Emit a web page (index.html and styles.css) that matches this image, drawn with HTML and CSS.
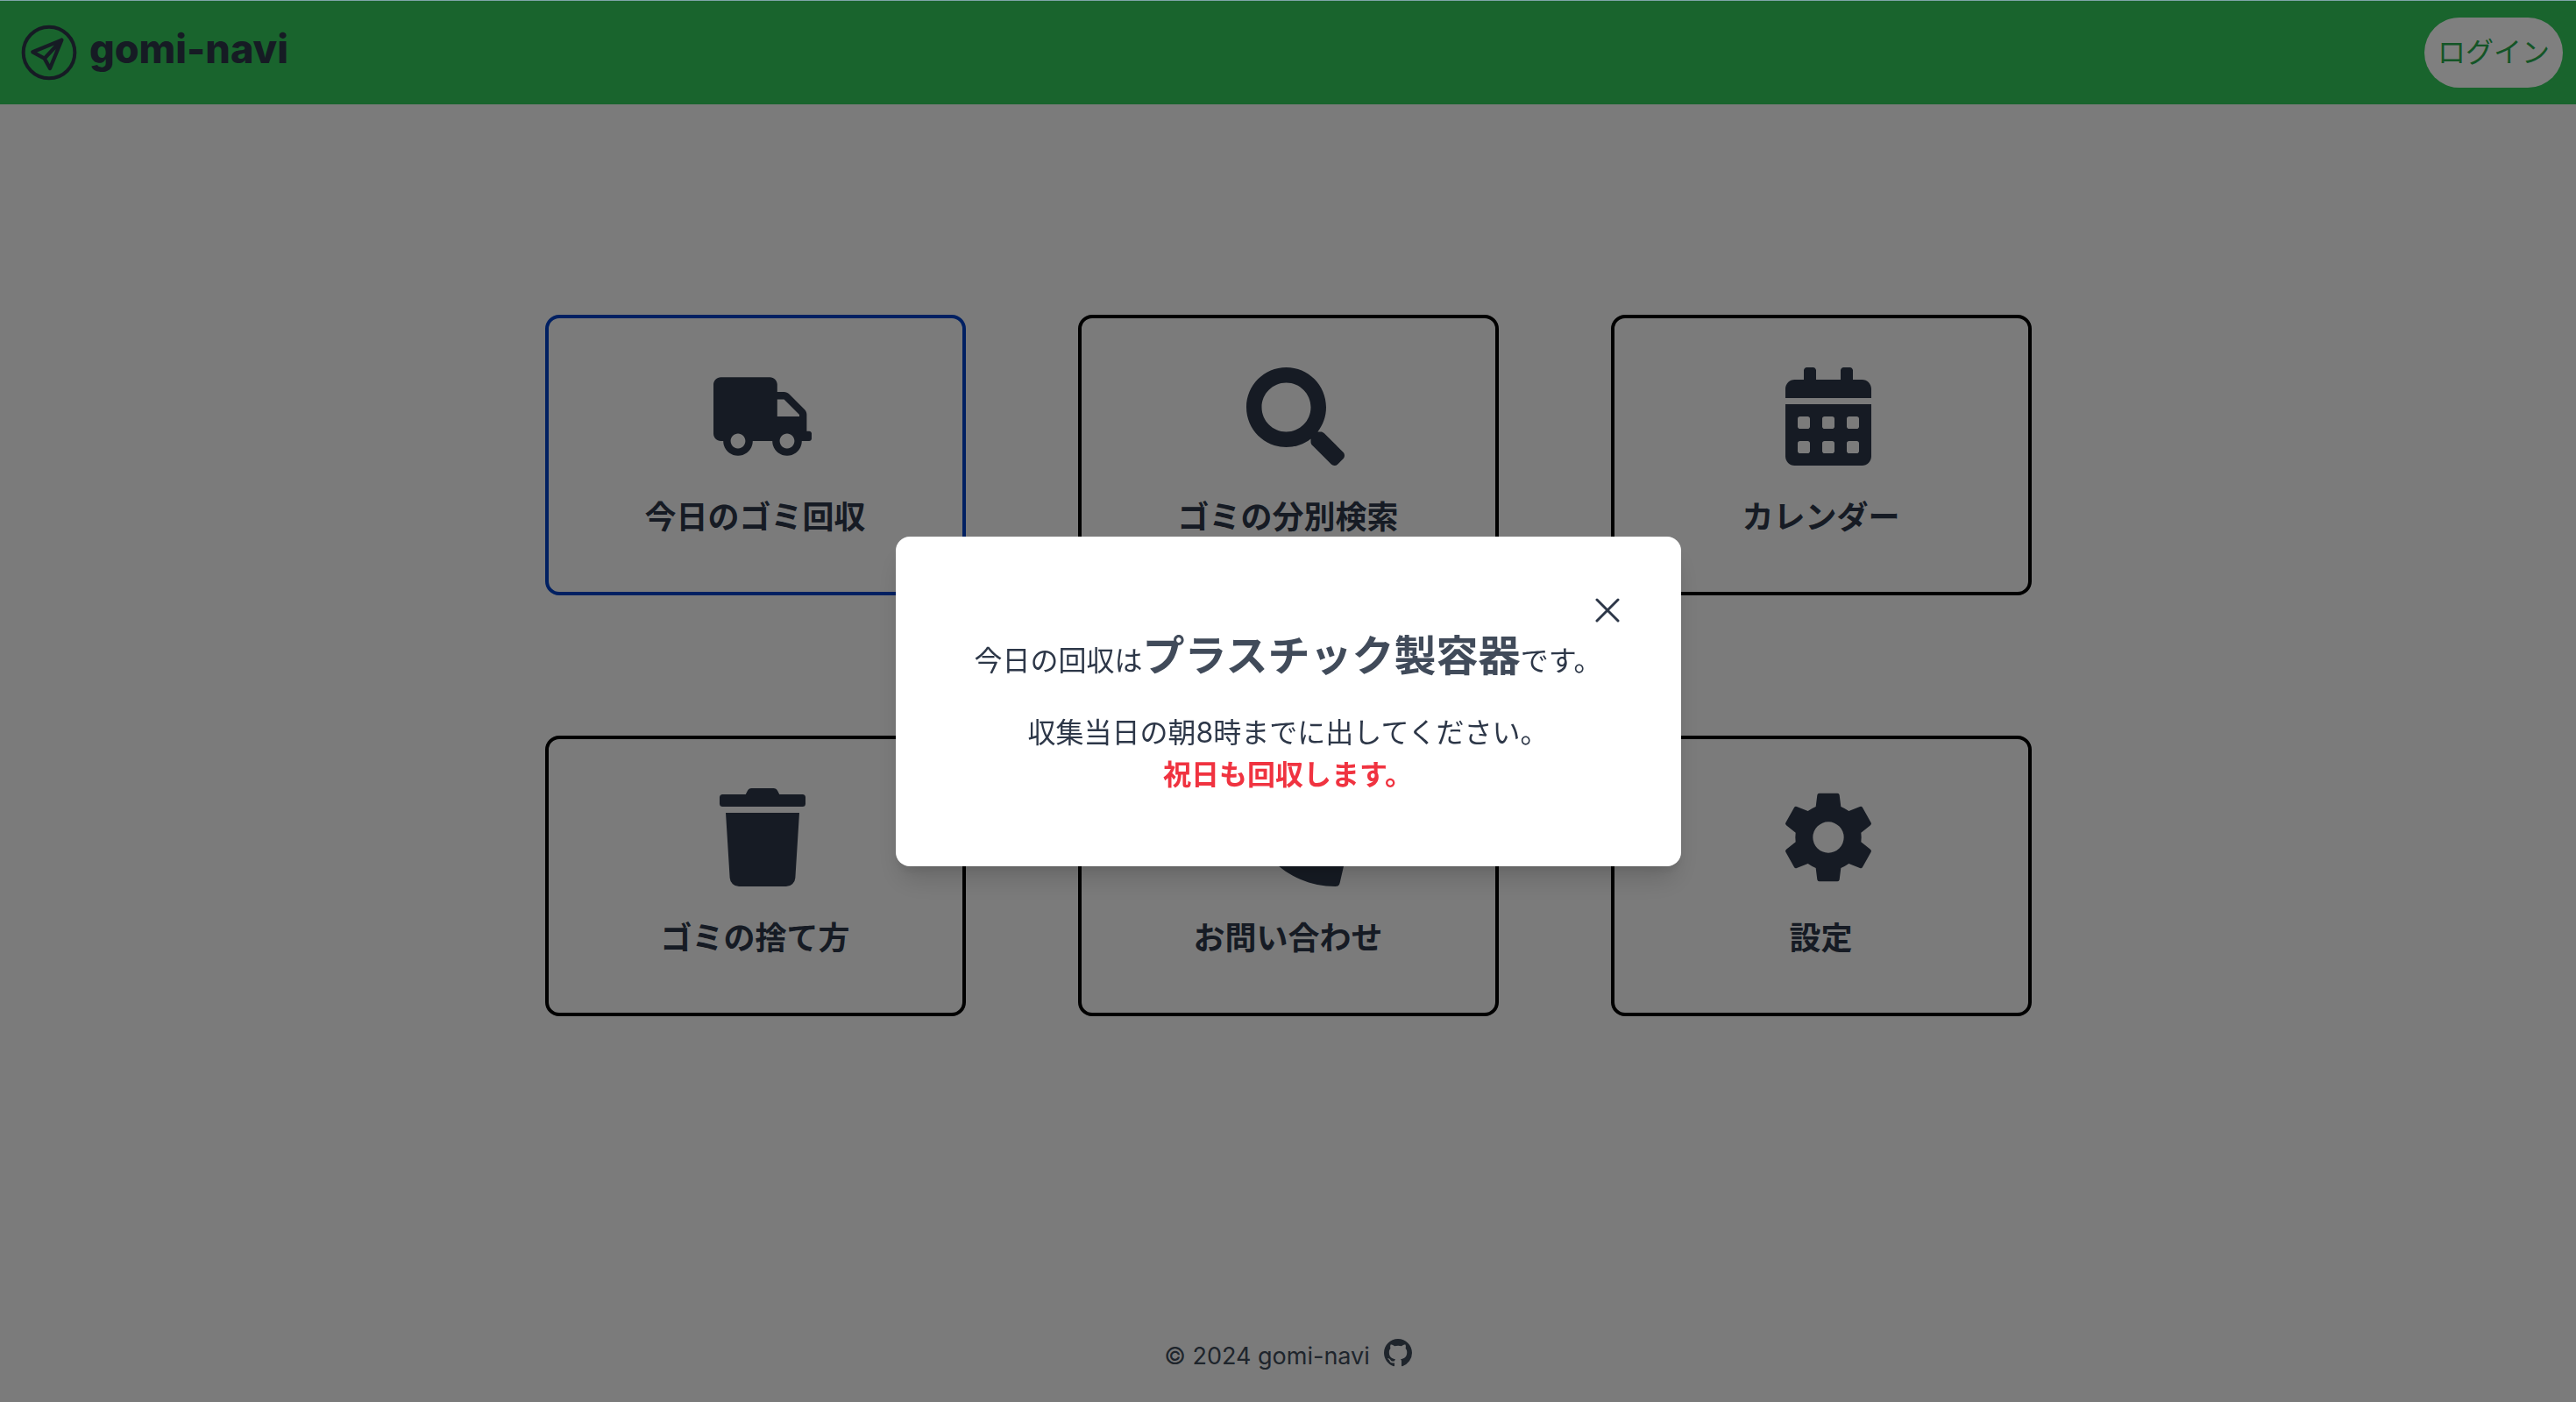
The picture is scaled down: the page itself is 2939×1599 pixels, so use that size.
FILE: index.html
```html
<!DOCTYPE html>
<html lang="ja">
<head>
<meta charset="utf-8">
<meta name="viewport" content="width=device-width, initial-scale=1">
<title>gomi-navi</title>
<link rel="stylesheet" href="styles.css">
</head>
<body>
<div class="page">
  <header class="header">
    <a class="brand" href="#">
      <svg class="brand-icon" viewBox="0 0 192 192" aria-hidden="true">
        <g fill="none" stroke="currentColor" stroke-linejoin="round" stroke-linecap="round">
          <circle cx="96" cy="96" r="88" stroke-width="12"/>
          <path d="M139 53L40 94L80 116L99 150ZM139 53L80 116" stroke-width="13"/>
        </g>
      </svg>
      <span class="brand-name">gomi-navi</span>
    </a>
    <button class="login" type="button">ログイン</button>
  </header>

  <main class="menu">
    <button class="card card-active" type="button">
      <svg class="card-icon" viewBox="0 0 640 512" aria-hidden="true"><path d="M624 352h-16V243.900c0-12.700-5.100-24.900-14.100-33.900L494 110.100c-9-9-21.200-14.100-33.900-14.100H416V48c0-26.500-21.500-48-48-48H48C21.500 0 0 21.500 0 48v320c0 26.500 21.500 48 48 48h16c0 53 43 96 96 96s96-43 96-96h128c0 53 43 96 96 96s96-43 96-96h48c8.800 0 16-7.200 16-16v-32c0-8.800-7.200-16-16-16zM160 464c-26.500 0-48-21.500-48-48s21.500-48 48-48 48 21.500 48 48-21.500 48-48 48zm320 0c-26.500 0-48-21.500-48-48s21.500-48 48-48 48 21.500 48 48-21.500 48-48 48zm80-208H416V144h44.100l99.900 99.900V256z"/></svg>
      <span class="card-label">今日のゴミ回収</span>
    </button>
    <button class="card" type="button">
      <svg class="card-icon" viewBox="0 0 512 512" aria-hidden="true"><path d="M505 442.700L405.300 343c-4.500-4.500-10.600-7-17-7H372c27.600-35.300 44-79.700 44-128C416 93.100 322.900 0 208 0S0 93.100 0 208s93.100 208 208 208c48.300 0 92.700-16.400 128-44v16.300c0 6.400 2.500 12.500 7 17l99.700 99.700c9.400 9.400 24.600 9.400 33.900 0l28.300-28.300c9.400-9.400 9.400-24.600.1-34zM208 336c-70.700 0-128-57.200-128-128 0-70.700 57.200-128 128-128 70.700 0 128 57.200 128 128 0 70.700-57.200 128-128 128z"/></svg>
      <span class="card-label">ゴミの分別検索</span>
    </button>
    <button class="card" type="button">
      <svg class="card-icon" viewBox="0 0 448 512" aria-hidden="true"><path d="M0 464c0 26.500 21.500 48 48 48h352c26.500 0 48-21.500 48-48V192H0v272zm320-196c0-6.600 5.400-12 12-12h40c6.600 0 12 5.400 12 12v40c0 6.600-5.400 12-12 12h-40c-6.600 0-12-5.400-12-12v-40zm0 128c0-6.600 5.400-12 12-12h40c6.600 0 12 5.400 12 12v40c0 6.600-5.400 12-12 12h-40c-6.600 0-12-5.400-12-12v-40zM192 268c0-6.600 5.400-12 12-12h40c6.600 0 12 5.400 12 12v40c0 6.600-5.400 12-12 12h-40c-6.600 0-12-5.400-12-12v-40zm0 128c0-6.600 5.400-12 12-12h40c6.600 0 12 5.400 12 12v40c0 6.600-5.400 12-12 12h-40c-6.600 0-12-5.400-12-12v-40zM64 268c0-6.600 5.400-12 12-12h40c6.600 0 12 5.400 12 12v40c0 6.600-5.400 12-12 12H76c-6.600 0-12-5.400-12-12v-40zm0 128c0-6.600 5.400-12 12-12h40c6.600 0 12 5.400 12 12v40c0 6.600-5.400 12-12 12H76c-6.600 0-12-5.400-12-12v-40zM400 64h-48V16c0-8.800-7.200-16-16-16h-32c-8.800 0-16 7.200-16 16v48H160V16c0-8.800-7.200-16-16-16h-32c-8.800 0-16 7.200-16 16v48H48C21.500 64 0 85.500 0 112v48h448v-48c0-26.500-21.500-48-48-48z"/></svg>
      <span class="card-label">カレンダー</span>
    </button>
    <button class="card" type="button">
      <svg class="card-icon" viewBox="0 0 448 512" aria-hidden="true"><path d="M432 32H312l-9.400-18.700A24 24 0 0 0 281.100 0H166.800a23.720 23.720 0 0 0-21.400 13.300L136 32H16A16 16 0 0 0 0 48v32a16 16 0 0 0 16 16h416a16 16 0 0 0 16-16V48a16 16 0 0 0-16-16zM53.200 467a48 48 0 0 0 47.900 45h245.800a48 48 0 0 0 47.900-45L416 128H32z"/></svg>
      <span class="card-label">ゴミの捨て方</span>
    </button>
    <button class="card" type="button">
      <svg class="card-icon" viewBox="0 0 512 512" aria-hidden="true"><path d="M497.390 361.800l-112-48a24 24 0 0 0-28 6.900l-49.600 60.600A370.660 370.660 0 0 1 130.600 204.110l60.600-49.600a23.940 23.940 0 0 0 6.900-28l-48-112A24.160 24.160 0 0 0 122.600.61l-104 24A24 24 0 0 0 0 48c0 256.500 207.900 464 464 464a24 24 0 0 0 23.400-18.600l24-104a24.290 24.290 0 0 0-14.010-27.600z"/></svg>
      <span class="card-label">お問い合わせ</span>
    </button>
    <button class="card" type="button">
      <svg class="card-icon" viewBox="-168 -168 336 336" aria-hidden="true"><path fill-rule="evenodd" d="M-38-145Q-37-151-31-151H31Q37-151 38-145L43-105Q57-99 70-90L108-105Q114-107 117-102L146-50Q149-45 144-41L112-16Q114 0 112 16L144 41Q149 45 146 50L117 102Q114 107 108 105L70 90Q57 99 43 105L38 145Q37 151 31 151H-31Q-37 151-38 145L-43 105Q-57 99-70 90L-108 105Q-114 107-117 102L-146 50Q-149 45-144 41L-112 16Q-114 0-112-16L-144-41Q-149-45-146-50L-117-102Q-114-107-108-105L-70-90Q-57-99-43-105ZM0-53A53 53 0 1 0 0 53A53 53 0 1 0 0-53Z"/></svg>
      <span class="card-label">設定</span>
    </button>
  </main>

  <footer class="footer">
    <span>© 2024 gomi-navi</span>
    <a class="github" href="#" aria-label="GitHub">
      <svg viewBox="0 0 16 16" aria-hidden="true"><path d="M8 0C3.580 0 0 3.580 0 8c0 3.540 2.290 6.530 5.470 7.590.4.070.55-.17.55-.38 0-.19-.01-.82-.01-1.490-2.010.37-2.530-.49-2.690-.94-.09-.23-.48-.94-.82-1.130-.28-.15-.68-.52-.01-.53.63-.01 1.080.58 1.230.82.72 1.210 1.870.87 2.330.66.07-.52.28-.87.51-1.070-1.780-.2-3.640-.89-3.640-3.950 0-.87.31-1.590.82-2.150-.08-.2-.36-1.020.08-2.120 0 0 .67-.21 2.200.82.64-.18 1.320-.27 2-.27s1.360.09 2 .27c1.530-1.040 2.200-.82 2.200-.82.44 1.100.16 1.920.08 2.120.51.56.82 1.270.82 2.150 0 3.070-1.870 3.750-3.650 3.950.29.25.54.73.54 1.480 0 1.070-.01 1.930-.01 2.200 0 .21.15.46.55.38A8.010 8.010 0 0 0 16 8c0-4.420-3.580-8-8-8z"/></svg>
    </a>
  </footer>
</div>

<div class="overlay">
  <section class="modal" role="dialog" aria-modal="true" aria-label="今日のゴミ回収">
    <button class="close" type="button" aria-label="閉じる">
      <svg viewBox="0 0 28 28" aria-hidden="true"><path d="M2 2L26 26M26 2L2 26" fill="none" stroke="currentColor" stroke-width="3" stroke-linecap="round"/></svg>
    </button>
    <p class="today">今日の回収は<strong class="kind">プラスチック製容器</strong>です。</p>
    <p>収集当日の朝8時までに出してください。</p>
    <p class="notice">祝日も回収します。</p>
  </section>
</div>
</body>
</html>
```
FILE: styles.css
```css
* {
  box-sizing: border-box;
}

body {
  margin: 0;
  background: #f7f7f7;
  color: #2d3748;
  font-family: Inter, "Noto Sans CJK JP", sans-serif;
  font-size: 32px;
  line-height: 48px;
}

button {
  padding: 0;
  border: 0;
  background: none;
  color: inherit;
  font: inherit;
  cursor: pointer;
}

p {
  margin: 0;
}

a {
  color: inherit;
  text-decoration: none;
}

.page {
  display: flex;
  flex-direction: column;
  min-height: 100vh;
}

.header {
  display: flex;
  align-items: center;
  justify-content: space-between;
  padding: 20px 15px 19px 24px;
  background: #32c85a;
}

.brand {
  display: flex;
  align-items: center;
  gap: 14px;
}

.brand-icon {
  width: 64px;
  height: 64px;
}

.brand-name {
  padding-bottom: 8px;
  font-size: 45px;
  font-weight: 800;
}

.login {
  padding: 16px 15px;
  border-radius: 40px;
  background: #fff;
  color: #28aa4c;
}

.menu {
  display: grid;
  grid-template-columns: repeat(3, 480px);
  gap: 160px 128px;
  flex: 1;
  justify-content: center;
  align-content: start;
  padding: 240px 32px;
}

.card {
  display: flex;
  flex-direction: column;
  align-items: center;
  gap: 32px;
  height: 320px;
  padding-top: 56px;
  border: 4px solid #000;
  border-radius: 16px;
}

.card-active {
  border-color: #0040c4;
}

.card-icon {
  width: 112px;
  height: 112px;
  margin-left: 16px;
  fill: currentColor;
}

.card-label {
  font-size: 36px;
  font-weight: 700;
  line-height: 54px;
}

.footer {
  display: flex;
  align-items: center;
  justify-content: center;
  gap: 16px;
  padding-bottom: 28px;
  color: #3e4a58;
  font-size: 27px;
}

.github {
  padding-bottom: 8px;
}

.github svg {
  display: block;
  width: 32px;
  height: 32px;
  fill: currentColor;
}

.overlay {
  position: fixed;
  inset: 0;
  display: flex;
  align-items: center;
  justify-content: center;
  border-top: 1px solid #7fa5a8;
  background: rgba(0, 0, 0, 0.5);
}

.modal {
  position: relative;
  width: 896px;
  padding: 106px 64px 80px;
  border-radius: 16px;
  background: #fff;
  box-shadow: 0 20px 30px -6px rgba(0, 0, 0, 0.15), 0 8px 12px -4px rgba(0, 0, 0, 0.1);
  text-align: center;
}

.close {
  position: absolute;
  top: 60px;
  right: 60px;
  display: grid;
  place-items: center;
  width: 48px;
  height: 48px;
}

.close svg {
  width: 28px;
  height: 28px;
}

.today {
  margin-bottom: 22px;
  line-height: 72px;
}

.kind {
  color: #414b5a;
  font-size: 48px;
  line-height: 48px;
}

.notice {
  color: #f03340;
  font-weight: 700;
}
```
